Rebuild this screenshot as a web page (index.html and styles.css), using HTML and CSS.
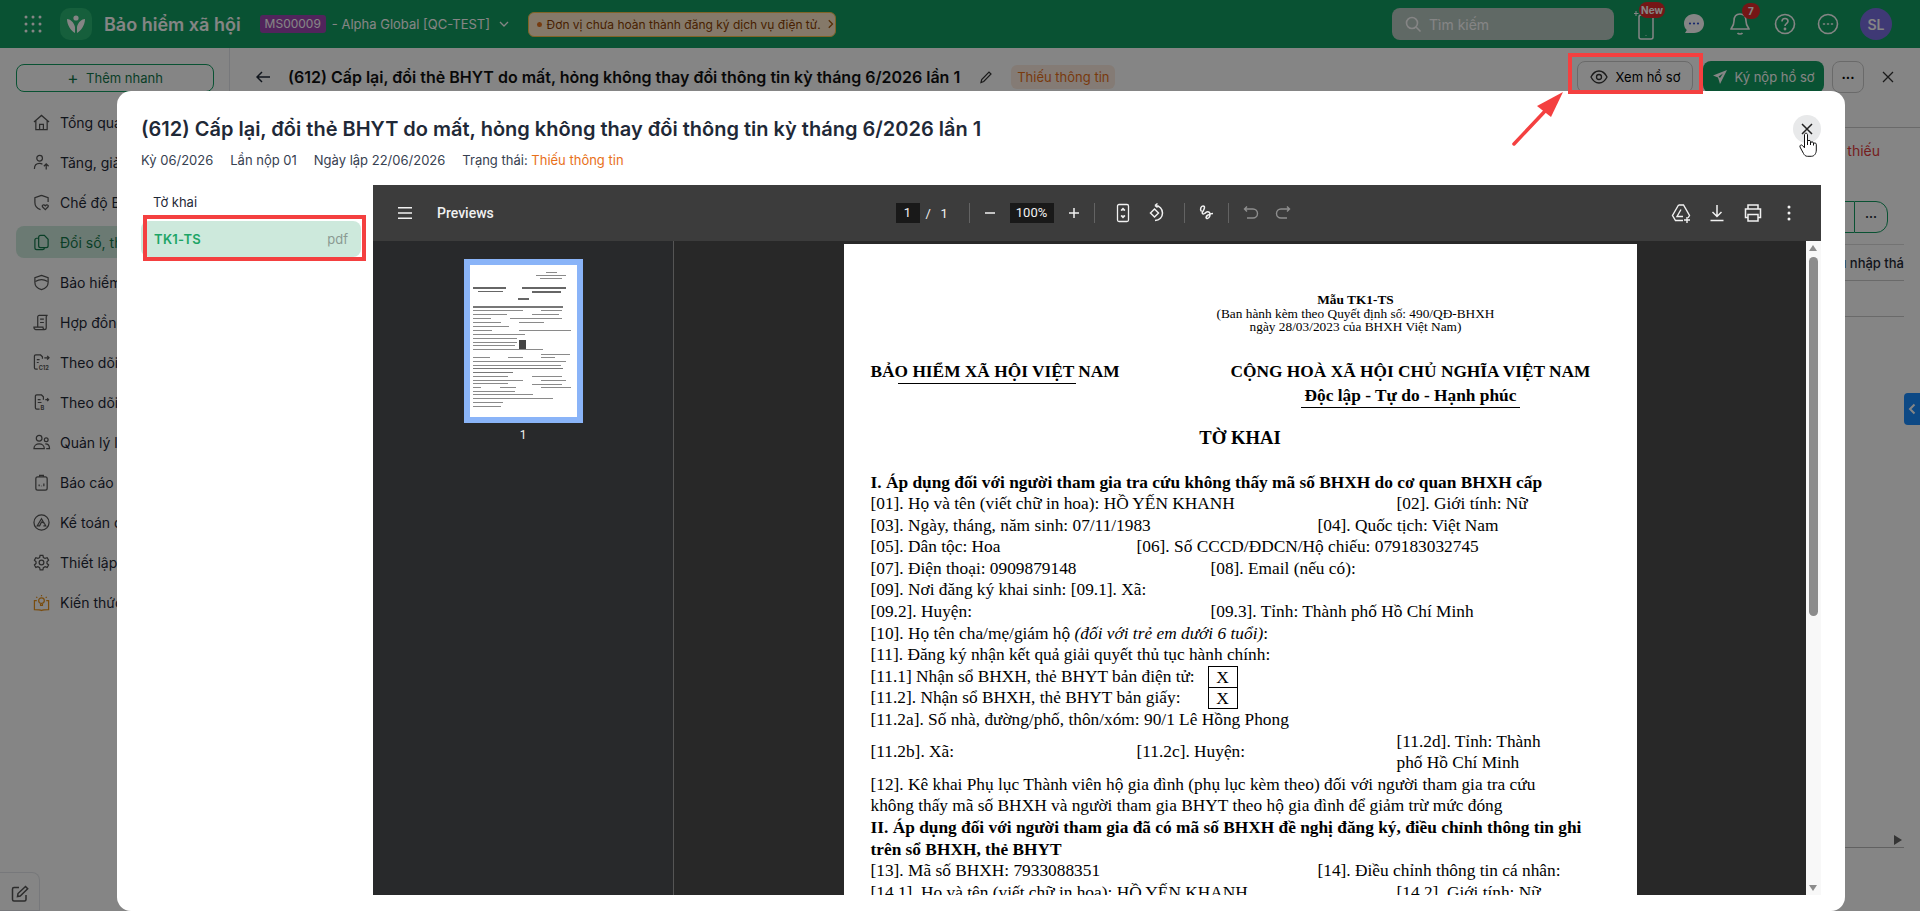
FILE: index.html
```html
<!DOCTYPE html>
<html lang="vi">
<head>
    <meta charset="UTF-8">
    <meta name="viewport" content="width=device-width, initial-scale=1.0">
    <title>Bảo hiểm xã hội</title>
    <link rel="stylesheet" href="styles.css">
</head>
<body>
    <div class="app">
        <!-- Top bar -->
        <header class="topbar">
            <svg class="apps" width="20" height="20" viewBox="0 0 20 20" fill="#fff"><circle cx="3" cy="3" r="1.5"/><circle cx="10" cy="3" r="1.5"/><circle cx="17" cy="3" r="1.5"/><circle cx="3" cy="10" r="1.5"/><circle cx="10" cy="10" r="1.5"/><circle cx="17" cy="10" r="1.5"/><circle cx="3" cy="17" r="1.5"/><circle cx="10" cy="17" r="1.5"/><circle cx="17" cy="17" r="1.5"/></svg>
            <div class="logo">
                <svg width="22" height="22" viewBox="0 0 22 22" fill="#fff"><circle cx="11" cy="5" r="2.6"/><path d="M2 6c3 0 7 3 8 8v6C6 18 2 12 2 6zM20 6c-3 0-7 3-8 8v6c4-2 8-8 8-14z"/></svg>
            </div>
            <div class="brand">Bảo hiểm xã hội</div>
            <span class="org-code">MS00009</span>
            <span class="org-name">- Alpha Global [QC-TEST]</span>
            <svg class="org-caret" width="12" height="12" viewBox="0 0 12 12" fill="none" stroke="#fff" stroke-width="1.3"><path d="M2 4l4 4 4-4"/></svg>
            <div class="notice">
                <span class="notice-dot"></span>
                <span>Đơn vị chưa hoàn thành đăng ký dịch vụ điện tử.</span>
                <svg width="10" height="12" viewBox="0 0 10 12" fill="none" stroke="#a35a10" stroke-width="1.4"><path d="M3 2l4 4-4 4"/></svg>
            </div>
            <div class="search">
                <svg width="18" height="18" viewBox="0 0 18 18" fill="none" stroke="#fff" stroke-width="1.6"><circle cx="8" cy="8" r="5.5"/><path d="M12 12l4.5 4.5"/></svg>
                <span>Tìm kiếm</span>
            </div>
            <div class="top-icons">
                <div class="top-icon phone">
                    <svg width="24" height="32" viewBox="0 0 24 32" fill="none" stroke="#fff" stroke-width="1.5"><rect x="5" y="7" width="14" height="24" rx="2"/><path d="M12 27.5v.5"/><path d="M2 3v5M-.5 5.5h5" stroke-width="1"/></svg>
                    <span class="badge new">New</span>
                </div>
                <div class="top-icon chat">
                    <svg width="22" height="22" viewBox="0 0 22 22"><path d="M11 1c5.5 0 10 3.900 10 9.500S16.500 20 11 20H2l1.800-3C2 15.500 1 13 1 10.500 1 4.900 5.500 1 11 1z" fill="#fff"/><circle cx="7" cy="10.500" r="1.100" fill="#2f4fd0"/><circle cx="11" cy="10.500" r="1.100" fill="#2f4fd0"/><circle cx="15" cy="10.500" r="1.100" fill="#2f4fd0"/></svg>
                </div>
                <div class="top-icon bell">
                    <svg width="22" height="24" viewBox="0 0 22 24" fill="none" stroke="#fff" stroke-width="1.6"><path d="M11 2c-4 0-6 3-6 7 0 5-3 7-3 8h18c0-1-3-3-3-8 0-4-2-7-6-7z"/><path d="M8.500 21c1 1.300 4 1.300 5 0"/></svg>
                    <span class="badge count">7</span>
                </div>
                <div class="top-icon help">
                    <svg width="22" height="22" viewBox="0 0 22 22" fill="none" stroke="#fff" stroke-width="1.6"><circle cx="11" cy="11" r="9.500"/><path d="M8 8.500C8 6.500 9.500 5.500 11 5.500s3 1 3 2.800c0 2.400-3 2.400-3 4.700"/><circle cx="11" cy="16" r=".6"/></svg>
                </div>
                <div class="top-icon more">
                    <svg width="22" height="22" viewBox="0 0 22 22" fill="none" stroke="#fff" stroke-width="1.6"><circle cx="11" cy="11" r="9.500"/><path d="M6.500 11h1M10.500 11h1M14.500 11h1" stroke-linecap="round"/></svg>
                </div>
                <div class="avatar">SL</div>
            </div>
        </header>

        <div class="content">
            <!-- Sidebar -->
            <aside class="sidebar">
                <button class="quick-add"><span class="plus">+</span> Thêm nhanh</button>
                <nav class="menu">
                    <a class="menu-item"><svg viewBox="0 0 18 18"><path d="M1 8.500L9 1.500l8 7M3 7v9.500h12V7M7 16.500V11h4v5.500"/></svg>Tổng quan</a>
                    <a class="menu-item"><svg viewBox="0 0 18 18"><circle cx="7" cy="4.500" r="3"/><path d="M1.500 16c0-4 2.500-6 5.500-6 1 0 2 .2 3 .8M14 16.500v-6M11.500 13l2.500-2.500 2.500 2.500"/></svg>Tăng, giảm lao động</a>
                    <a class="menu-item"><svg viewBox="0 0 18 18"><path d="M9 1.500l7 2.500v4.500M9 1.500L2 4v5c0 3.500 2.500 6.500 6 7.500"/><path d="M13 16.500l-3-3c-1-1.500 1.500-3 3-1 1.500-2 4-.5 3 1z"/></svg>Chế độ BHXH</a>
                    <a class="menu-item active"><svg viewBox="0 0 18 18"><path d="M6 3.500c0-1 .8-2 2-2h4l4 4v7c0 1-.8 2-2 2H8c-1.200 0-2-1-2-2z"/><path d="M6 4.500H4c-1.200 0-2 1-2 2v8c0 1.200.8 2 2 2h6c1.200 0 2-.8 2-2"/></svg>Đổi sổ, thẻ BHYT</a>
                    <a class="menu-item"><svg viewBox="0 0 18 18"><path d="M9 1.500l7 2.500v5c0 4-3 6.500-7 7.500-4-1-7-3.500-7-7.500V4z"/><path d="M2.500 8c4-2.500 9-2.500 13 0"/></svg>Bảo hiểm xã hội</a>
                    <a class="menu-item"><svg viewBox="0 0 18 18"><path d="M5 14V3c0-.8.7-1.500 1.500-1.500h9c-1 0-1.500.7-1.500 1.500v11.500c0 1-.8 2-2 2H3c-1 0-2-1-2-2.500h9.500c0 1 .5 2 1.500 2.500M7.500 5.500h4M7.500 9h4"/></svg>Hợp đồng</a>
                    <a class="menu-item"><svg viewBox="0 0 18 18"><path d="M10 5V3L8 1H3c-1 0-1.500.5-1.500 1.500v12C1.500 15.500 2 16 3 16h2M4 6h3M4 9h2M12 4h5M15 2l2 2-2 2"/><text x="6" y="17" class="icon-label">C12</text></svg>Theo dõi C12</a>
                    <a class="menu-item"><svg viewBox="0 0 18 18"><path d="M11 6V3L9 1H4c-1 0-1.500.5-1.500 1.500v12c0 1 .5 1.500 1.500 1.500h3M5 6h3M5 9h4M13 6h3M15 4.500L16.500 6 15 7.500"/><text x="8" y="17" class="icon-label">B</text></svg>Theo dõi D02</a>
                    <a class="menu-item"><svg viewBox="0 0 18 18"><circle cx="6.500" cy="4.500" r="3"/><circle cx="14" cy="6" r="2"/><path d="M1 15.500c0-3 2.500-5 5.500-5s5.500 2 5.500 5zM13 10.500c2.500 0 4.500 1.500 4.500 5H14"/></svg>Quản lý lao động</a>
                    <a class="menu-item"><svg viewBox="0 0 18 18"><rect x="3" y="3" width="12" height="14" rx="2"/><path d="M7 3V1.500h4V3M6.500 13v-2M9 13v-.5M11.500 13v-3"/></svg>Báo cáo</a>
                    <a class="menu-item"><svg viewBox="0 0 18 18"><circle cx="9" cy="9" r="8"/><path d="M4.500 12.500L9 5l2.500 4.500-2.500-1-2 4zM11 12.500h2.500L11.500 9"/></svg>Kế toán dịch vụ</a>
                    <a class="menu-item"><svg viewBox="0 0 18 18"><circle cx="9" cy="9" r="2.500"/><path d="M7.500 1.500h3l.5 2.200 1.800 1 2.200-.7 1.500 2.600-1.700 1.600v1.800l1.700 1.600L15 14.200l-2.200-.7-1.800 1-.5 2.200h-3L7 14.500l-1.800-1-2.200.7-1.500-2.600 1.700-1.600V8.200L1.500 6.600 3 4l2.200.7 1.800-1z"/></svg>Thiết lập</a>
                    <a class="menu-item know"><svg viewBox="0 0 18 18"><circle cx="9" cy="7" r="3"/><path d="M8 10.500v1.500h2v-1.500M9 1v1.500M3.500 3l1 1M14.500 3l-1 1M4 7H1.500v9.500c3 0 6 0 7.500 1 1.500-1 4.500-1 7.500-1V7H14"/></svg>Kiến thức</a>
                </nav>
                <div class="note-btn">
                    <svg width="18" height="18" viewBox="0 0 18 18" fill="none" stroke="#555" stroke-width="1.500"><path d="M8 2.500H3c-1 0-1.500.5-1.500 1.500v10.500c0 1 .5 1.500 1.500 1.500h10.500c1 0 1.500-.5 1.500-1.500V10"/><path d="M6.500 11.500l.5-3 7.500-7 2.200 2.200-7.500 7.300z"/></svg>
                </div>
            </aside>

            <!-- Page behind the dialog -->
            <main class="main">
                <div class="subhead">
                    <svg class="back" width="14" height="12" viewBox="0 0 14 12" fill="none" stroke="#1f2937" stroke-width="1.500"><path d="M14 6H1M6 1L1 6l5 5"/></svg>
                    <div class="sub-title">(612) Cấp lại, đổi thẻ BHYT do mất, hỏng không thay đổi thông tin kỳ tháng 6/2026 lần 1</div>
                    <svg class="pencil" width="14" height="14" viewBox="0 0 14 14" fill="none" stroke="#333" stroke-width="1.200"><path d="M2 12.500l.7-3L10 2l2 2-7.300 7.500z"/></svg>
                    <span class="sub-tag">Thiếu thông tin</span>
                    <div class="sub-actions">
                        <button class="btn-view">
                            <svg width="18" height="18" viewBox="0 0 18 18" fill="none" stroke="#333" stroke-width="1.300"><path d="M1 9c2-4 5-6 8-6s6 2 8 6c-2 4-5 6-8 6s-6-2-8-6z"/><circle cx="9" cy="9" r="2.500"/></svg>
                            Xem hồ sơ
                        </button>
                        <button class="btn-submit">
                            <svg width="16" height="16" viewBox="0 0 16 16" fill="#fff"><path d="M15 1L1 6.500l5 2 2 6.500zM6.500 7.500L11 4.500 8 9z"/></svg>
                            Ký nộp hồ sơ
                        </button>
                        <button class="btn-dots">···</button>
                        <svg class="sub-close" width="12" height="12" viewBox="0 0 12 12" stroke="#333" stroke-width="1.300"><path d="M1 1l10 10M11 1L1 11"/></svg>
                    </div>
                </div>
                <div class="strip">
                    <span class="strip-text">Còn thiếu</span>
                </div>
                <div class="side-card">
                    <div class="group-row"><span class="group-a"></span><span class="group-b">···</span></div>
                    <div class="card-row tabs-row">Nhập thông tin thu nhập thá</div>
                    <div class="card-row"></div>
                    <div class="card-spacer">
                        <svg class="play" width="8" height="10" viewBox="0 0 8 10" fill="#666"><path d="M0 0l8 5-8 5z"/></svg>
                    </div>
                    <div class="card-foot">
                        <svg width="14" height="12" viewBox="0 0 14 12" fill="none" stroke="#666" stroke-width="1.500"><path d="M2 1l5 5-5 5M12 1v10"/></svg>
                    </div>
                </div>
                <div class="side-tab">
                    <svg width="8" height="12" viewBox="0 0 8 12" fill="none" stroke="#fff" stroke-width="2"><path d="M6.500 1.500L2 6l4.500 4.500"/></svg>
                </div>
            </main>
        </div>
    </div>

    <div class="overlay"></div>

    <!-- Dialog -->
    <section class="modal">
        <h1 class="modal-title">(612) Cấp lại, đổi thẻ BHYT do mất, hỏng không thay đổi thông tin kỳ tháng 6/2026 lần 1</h1>
        <div class="modal-meta">
            <span>Kỳ 06/2026</span>
            <span>Lần nộp 01</span>
            <span>Ngày lập 22/06/2026</span>
            <span>Trạng thái: <b>Thiếu thông tin</b></span>
        </div>
        <button class="modal-close">
            <svg width="12" height="12" viewBox="0 0 12 12" stroke="#222" stroke-width="1.500"><path d="M1 1l10 10M11 1L1 11"/></svg>
        </button>

        <div class="modal-body">
            <div class="files">
                <div class="files-label">Tờ khai</div>
                <div class="file-item"><span class="file-name">TK1-TS</span><span class="file-ext">pdf</span></div>
            </div>

            <div class="viewer">
                <div class="v-toolbar">
                    <div class="v-left">
                        <svg class="v-btn" viewBox="0 0 32 32" fill="#f1f1f1"><path d="M9 10h14v1.500H9zM9 15.250h14v1.500H9zM9 20.500h14V22H9z"/></svg>
                        <span class="v-title">Previews</span>
                    </div>
                    <div class="v-center">
                        <span class="v-box v-page">1</span>
                        <span class="v-of">/&nbsp;&nbsp;&nbsp;1</span>
                        <span class="v-sep"></span>
                        <svg class="v-btn m4" viewBox="0 0 32 32" fill="#f1f1f1"><path d="M11 15.250h10v1.500H11z"/></svg>
                        <span class="v-box v-zoom m4">100%</span>
                        <svg class="v-btn m4" viewBox="0 0 32 32" fill="#f1f1f1"><path d="M11 15.250h4.250V11h1.500v4.250H21v1.500h-4.250V21h-1.500v-4.250H11z"/></svg>
                        <span class="v-sep m4"></span>
                        <svg class="v-btn m12" viewBox="0 0 32 32" fill="none" stroke="#f1f1f1" stroke-width="1.300"><rect x="10.500" y="7.500" width="11" height="17" rx="1.500"/><path d="M14 13.500l2-2 2 2M14 18.500l2 2 2-2" fill="#f1f1f1"/></svg>
                        <svg class="v-btn" viewBox="0 0 32 32" fill="none" stroke="#f1f1f1" stroke-width="1.500"><path d="M11.500 16l4-4 4 4-4 4z"/><path d="M16 8.500c4.500 0 7.500 3.500 7.500 7.500S20.500 23.500 16 23.500M16 8.500l2.500-2M16 8.500l2.500 2"/></svg>
                        <span class="v-sep m13"></span>
                        <svg class="v-btn m5" viewBox="0 0 32 32" fill="none" stroke="#f1f1f1" stroke-width="1.500"><path d="M11.500 14.500c-2-2-.5-5.500 1.500-5.500 2.500 0 1.500 3-.5 6-1 1.500.5 2.500 2 1.500 2-1.500 3-3 5-1 1.500 1.500 0 6-2 6s-2-2 .5-3.500c1.500-1 3.500-1.500 5-1.500"/></svg>
                        <span class="v-sep m6"></span>
                        <svg class="v-btn m6 dim" viewBox="0 0 32 32" fill="none" stroke="#f1f1f1" stroke-width="1.400"><path d="M12 9.500L9.500 12l2.500 2.500M9.500 12H18c2.500 0 4.500 2 4.500 4.500S20.500 21 18 21h-6"/></svg>
                        <svg class="v-btn dim" viewBox="0 0 32 32" fill="none" stroke="#f1f1f1" stroke-width="1.400"><path d="M20 9.500l2.500 2.500-2.500 2.500M22.500 12H14c-2.500 0-4.500 2-4.500 4.500S11.500 21 14 21h6"/></svg>
                    </div>
                    <div class="v-right">
                        <svg class="v-act" viewBox="0 0 36 32" fill="none" stroke="#f1f1f1" stroke-width="1.400"><path d="M15.500 8h5l6 10.500-1.500 2.500M15.500 8L9.500 18.500l3 5H20"/><path d="M18 12.500L14 19.500h6"/><path d="M24 20v6M21 23h6"/></svg>
                        <svg class="v-act" viewBox="0 0 36 32" fill="none" stroke="#f1f1f1" stroke-width="1.500"><path d="M18 8v11M13.500 15l4.500 4.500 4.500-4.500M11.500 23.500h13"/></svg>
                        <svg class="v-act" viewBox="0 0 36 32" fill="none" stroke="#f1f1f1" stroke-width="1.500"><path d="M13 12V8h10v4M13 20.500H10.500v-8.500h15v8.500H23"/><rect x="13" y="17.500" width="10" height="6.500"/></svg>
                        <svg class="v-act" viewBox="0 0 36 32" fill="#f1f1f1"><circle cx="18" cy="10" r="1.500"/><circle cx="18" cy="16" r="1.500"/><circle cx="18" cy="22" r="1.500"/></svg>
                    </div>
                </div>

                <div class="v-content">
                    <div class="v-thumbs">
                        <div class="thumb">
                            <svg class="thumb-page" width="107" height="152" viewBox="0 0 107 152" fill="#8a8a8a">
                                <path d="M76 7h11v1H76zM66 10h30v1H66zM70 13h22v1H70z"/>
                                <path fill="#666" d="M3 22h33v2H3zM52 22h44v2H52zM8 26h25v1H8zM62 26h29v2H62zM48 33h11v2H48z"/>
                                <path fill="#777" d="M3 41h90v2H3z"/>
                                <path d="M3 45h50v1H3zM71 45h21v1H71zM3 49h34v1H3zM62 49h27v1H62zM3 53h18v1H3zM40 53h52v1H40zM3 57h28v1H3zM49 57h25v1H49zM3 61h36v1H3zM3 65h19v1H3zM49 65h52v1H49zM3 69h52v1H3zM3 73h44v1H3zM3 77h44v1H3zM3 80h42v1H3zM3 84h70v1H3z"/>
                                <path fill="#444" d="M49 75h7v9h-7z"/>
                                <path d="M71 89h29v1H71zM71 92h14v1H71zM3 92h17v1H3zM38 92h15v1H38zM3 96h93v1H3zM3 100h88v1H3z"/>
                                <path fill="#777" d="M3 103h90v1H3zM3 107h40v1H3z"/>
                                <path d="M3 111h35v1H3zM62 111h30v1H62zM3 115h50v1H3zM71 115h25v1H71zM3 118h35v1H3zM62 119h30v1H62zM3 122h8v1H3zM30 122h16v1H30zM71 122h30v1H71zM3 126h42v1H3zM3 129h35v1H3zM38 129h25v1H38zM3 133h80v1H3zM3 137h30v1H3zM3 141h28v1H3z"/>
                            </svg>
                        </div>
                        <span class="thumb-num">1</span>
                    </div>
                    <div class="v-main">
                        <article class="pdf-page">
                            <div class="form-note">
                                <b>Mẫu TK1-TS</b>
                                <div>(Ban hành kèm theo Quyết định số: 490/QĐ-BHXH</div>
                                <div>ngày 28/03/2023 của BHXH Việt Nam)</div>
                            </div>
                            <div class="nation">
                                <div class="nation-left">
                                    <b>BẢO HIỂM XÃ HỘI VIỆT NAM</b>
                                    <div class="rule-left"></div>
                                </div>
                                <div class="nation-right">
                                    <b>CỘNG HOÀ XÃ HỘI CHỦ NGHĨA VIỆT NAM</b>
                                    <b>Độc lập - Tự do - Hạnh phúc</b>
                                    <div class="rule-right"></div>
                                </div>
                            </div>
                            <div class="form-title">TỜ KHAI</div>

                            <div class="line"><b>I. Áp dụng đối với người tham gia tra cứu không thấy mã số BHXH do cơ quan BHXH cấp</b></div>
                            <div class="line w526"><span>[01]. Họ và tên (viết chữ in hoa): HỒ YẾN KHANH</span><span>[02]. Giới tính: Nữ</span></div>
                            <div class="line w447"><span>[03]. Ngày, tháng, năm sinh: 07/11/1983</span><span>[04]. Quốc tịch: Việt Nam</span></div>
                            <div class="line w266"><span>[05]. Dân tộc: Hoa</span><span>[06]. Số CCCD/ĐDCN/Hộ chiếu: 079183032745</span></div>
                            <div class="line w340"><span>[07]. Điện thoại: 0909879148</span><span>[08]. Email (nếu có):</span></div>
                            <div class="line">[09]. Nơi đăng ký khai sinh: [09.1]. Xã:</div>
                            <div class="line w340"><span>[09.2]. Huyện:</span><span>[09.3]. Tỉnh: Thành phố Hồ Chí Minh</span></div>
                            <div class="line">[10]. Họ tên cha/mẹ/giám hộ&nbsp;<i>(đối với trẻ em dưới 6 tuổi)</i>:</div>
                            <div class="line">[11]. Đăng ký nhận kết quả giải quyết thủ tục hành chính:</div>
                            <div class="line w337"><span>[11.1] Nhận sổ BHXH, thẻ BHYT bản điện tử:</span><span class="check">X</span></div>
                            <div class="line w337"><span>[11.2]. Nhận sổ BHXH, thẻ BHYT bản giấy:</span><span class="check">X</span></div>
                            <div class="line">[11.2a]. Số nhà, đường/phố, thôn/xóm: 90/1 Lê Hồng Phong</div>
                            <div class="line-tall">
                                <span>[11.2b]. Xã:</span>
                                <span>[11.2c]. Huyện:</span>
                                <span>[11.2d]. Tỉnh: Thành phố Hồ Chí Minh</span>
                            </div>
                            <div class="line">[12]. Kê khai Phụ lục Thành viên hộ gia đình (phụ lục kèm theo) đối với người tham gia tra cứu</div>
                            <div class="line">không thấy mã số BHXH và người tham gia BHYT theo hộ gia đình để giảm trừ mức đóng</div>
                            <div class="line"><b>II. Áp dụng đối với người tham gia đã có mã số BHXH đề nghị đăng ký, điều chỉnh thông tin ghi</b></div>
                            <div class="line"><b>trên sổ BHXH, thẻ BHYT</b></div>
                            <div class="line w447"><span>[13]. Mã số BHXH: 7933088351</span><span>[14]. Điều chỉnh thông tin cá nhân:</span></div>
                            <div class="line w526"><span>[14.1]. Họ và tên (viết chữ in hoa): HỒ YẾN KHANH</span><span>[14.2]. Giới tính: Nữ</span></div>
                        </article>
                    </div>
                    <div class="v-scroll">
                        <span class="arrow-up"></span>
                        <span class="scroll-thumb"></span>
                        <span class="arrow-down"></span>
                    </div>
                </div>
            </div>
        </div>
    </section>

    <!-- Red marks drawn over the screenshot -->
    <div class="mark mark-view"></div>
    <div class="mark mark-file"></div>
    <svg class="mark-arrow" width="70" height="70" viewBox="0 0 70 70" fill="#f44040"><path d="M9 59L42 24" stroke="#f44040" stroke-width="3.500" stroke-linecap="round"/><path d="M58 7L32 21l14 11z"/></svg>
    <svg class="hand" width="18" height="25" viewBox="0 0 18 25"><path d="M5.500 11V2.800C5.500.7 8.500.7 8.500 2.800V9.500c0-1.500 3-1.500 3 0V11c0-1.500 3-1.500 3 0v1c0-1.400 2.800-1.400 2.800.3V18c0 3.500-2 6.300-5 6.300H8.500c-2 0-3-1-4-2.800L1 15c-.7-1.700 1.500-2.800 2.500-1.500l2 2.300z" fill="#fff" stroke="#111" stroke-width="1"/><path d="M8.500 9.500V13M11.500 11v2M14.500 12v1.500" fill="none" stroke="#111" stroke-width="1"/></svg>
</body>
</html>
```

FILE: styles.css
```css
/* Reset and base styles */
* {
    box-sizing: border-box;
    margin: 0;
    padding: 0;
}

html, body {
    height: 100%;
    overflow: hidden;
}

body {
    font-family: Inter, "Noto Sans", sans-serif;
    font-size: 14px;
    color: #1f2937;
    background-color: #fff;
}

button {
    font-family: inherit;
    cursor: pointer;
}

.app {
    display: flex;
    flex-direction: column;
    height: 911px;
}

/* Top bar */
.topbar {
    display: flex;
    align-items: center;
    flex: none;
    height: 48px;
    padding-left: 23px;
    background-color: #139e62;
    color: #fff;
}

.apps {
    flex: none;
}

.logo {
    display: flex;
    align-items: center;
    justify-content: center;
    width: 32px;
    height: 32px;
    margin-left: 17px;
    border-radius: 10px;
    background-color: #2bb673;
}

.brand {
    margin-left: 12px;
    font-size: 18px;
    font-weight: 600;
    white-space: nowrap;
}

.org-code {
    margin-left: 19px;
    padding: 0 5px;
    height: 18px;
    line-height: 18px;
    font-size: 12px;
    border-radius: 3px;
    background-color: #9c46b0;
}

.org-name {
    margin-left: 6px;
    font-size: 13px;
    white-space: nowrap;
}

.org-caret {
    margin-left: 8px;
}

.notice {
    display: flex;
    align-items: center;
    gap: 5px;
    width: 308px;
    height: 25px;
    margin-left: 18px;
    padding-left: 8px;
    font-size: 12px;
    white-space: nowrap;
    color: #8a3d00;
    background-color: #ffe9c9;
    border: 1px solid #f5c04a;
    border-radius: 6px;
}

.notice-dot {
    width: 5px;
    height: 5px;
    border-radius: 50%;
    background-color: #e2711d;
}

.search {
    display: flex;
    align-items: center;
    gap: 7px;
    width: 222px;
    height: 32px;
    margin-left: auto;
    padding-left: 12px;
    font-size: 14px;
    border-radius: 8px;
    background-color: #b9c9c2;
}

.top-icons {
    display: flex;
    align-items: center;
    margin-left: 20px;
    margin-right: 28px;
}

.top-icon {
    position: relative;
    display: flex;
}

.chat {
    margin-left: 25px;
}

.bell {
    margin-left: 24px;
}

.help {
    margin-left: 23px;
}

.more {
    margin-left: 21px;
}

.avatar {
    display: flex;
    align-items: center;
    justify-content: center;
    width: 32px;
    height: 32px;
    margin-left: 21px;
    font-size: 14px;
    font-weight: 600;
    border-radius: 50%;
    background-color: #7a6ee0;
}

.badge {
    position: absolute;
    font-weight: 700;
    font-size: 10px;
    text-align: center;
    border-radius: 8px;
    background-color: #e12b2b;
}

.badge.new {
    top: -6px;
    left: 5px;
    width: 26px;
    height: 16px;
    line-height: 16px;
}

.badge.count {
    top: -9px;
    left: 13px;
    width: 18px;
    height: 16px;
    line-height: 16px;
}

/* Page under the dialog */
.content {
    display: flex;
    flex: 1;
    min-height: 0;
}

.sidebar {
    position: relative;
    flex: none;
    width: 230px;
    padding: 16px 16px 0;
    border-right: 1px solid #e5e7eb;
}

.quick-add {
    width: 198px;
    height: 28px;
    font-size: 13px;
    color: #14794c;
    background-color: #fff;
    border: 1px solid #139e62;
    border-radius: 8px;
}

.plus {
    font-size: 17px;
    vertical-align: -1px;
    margin-right: 4px;
}

.menu {
    margin-top: 14px;
}

.menu-item {
    display: flex;
    align-items: center;
    gap: 10px;
    height: 32px;
    margin-bottom: 8px;
    padding-left: 17px;
    font-size: 14px;
    white-space: nowrap;
    border-radius: 8px;
}

.menu-item svg {
    flex: none;
    width: 17px;
    height: 17px;
    fill: none;
    stroke: #555;
    stroke-width: 1.300;
    overflow: visible;
}

.icon-label {
    font-size: 6px;
    font-weight: 700;
    fill: #555;
    stroke: none;
}

.menu-item.active {
    color: #14794c;
    background-color: #cdeadc;
}

.menu-item.active svg {
    stroke: #14794c;
}

.menu-item.know svg {
    stroke: #e8921a;
}

.note-btn {
    position: absolute;
    left: 0;
    bottom: 0;
    display: flex;
    justify-content: center;
    width: 40px;
    height: 39px;
    padding-top: 12px;
    border: 1px solid #e5e7eb;
    border-left: none;
    border-radius: 0 8px 0 0;
}

.main {
    position: relative;
    flex: 1;
    min-width: 0;
    background-color: #fff;
}

.subhead {
    display: flex;
    align-items: center;
    height: 58px;
    padding: 0 0 0 26px;
    border-bottom: 1px solid #ccc;
    margin-bottom: 0;
    height: 80px;
    padding-bottom: 22px;
}

.back {
    flex: none;
}

.sub-title {
    margin-left: 18px;
    font-size: 16px;
    font-weight: 600;
    white-space: nowrap;
    color: #111;
}

.pencil {
    margin-left: 19px;
}

.sub-tag {
    margin-left: 18px;
    padding: 0 6px;
    height: 24px;
    line-height: 24px;
    font-size: 13px;
    color: #e8701a;
    background-color: #fdece0;
    border-radius: 6px;
}

.sub-actions {
    display: flex;
    align-items: center;
    margin-left: auto;
    margin-right: 26px;
}

.btn-view {
    display: flex;
    align-items: center;
    justify-content: center;
    gap: 8px;
    width: 116px;
    height: 32px;
    font-size: 13px;
    background-color: #fff;
    border: 1px solid #ccc;
    border-radius: 8px;
}

.btn-submit {
    display: flex;
    align-items: center;
    justify-content: center;
    gap: 6px;
    width: 121px;
    height: 32px;
    margin-left: 10px;
    font-size: 13px;
    color: #fff;
    background-color: #139e62;
    border: none;
    border-radius: 8px;
}

.btn-dots {
    width: 32px;
    height: 32px;
    margin-left: 8px;
    font-size: 13px;
    font-weight: 700;
    background-color: #fff;
    border: 1px solid #ccc;
    border-radius: 8px;
}

.sub-close {
    margin-left: 18px;
}

.strip {
    display: flex;
    justify-content: flex-end;
    align-items: center;
    height: 44px;
    padding-right: 40px;
    font-size: 14px;
    color: #e23b3b;
    background-color: #fff;
}

.side-card {
    position: absolute;
    top: 141px;
    left: 1400px;
    right: 16px;
    bottom: 16px;
    display: flex;
    flex-direction: column;
    border-radius: 12px;
    background-color: #fff;
}

.group-row {
    display: flex;
    flex: none;
    align-items: center;
    justify-content: flex-end;
    height: 56px;
    padding-right: 16px;
    border-bottom: 1px solid #ddd;
}

.group-a {
    width: 40px;
    height: 32px;
    border: 1px solid #139e62;
    border-right: none;
}

.group-b {
    width: 34px;
    height: 32px;
    line-height: 30px;
    text-align: center;
    font-weight: 700;
    font-size: 12px;
    border: 1px solid #139e62;
    border-radius: 0 12px 12px 0;
}

.card-row {
    flex: none;
    height: 36px;
    line-height: 36px;
    text-align: right;
    font-weight: 500;
    font-size: 13px;
    white-space: nowrap;
    overflow: hidden;
    border-bottom: 1px solid #ccc;
}

.card-spacer {
    display: flex;
    flex: 1;
    align-items: flex-end;
    justify-content: flex-end;
    padding: 0 2px 2px 0;
    border-bottom: 1px solid #bbb;
}

.card-foot {
    display: flex;
    flex: none;
    align-items: center;
    justify-content: center;
    height: 47px;
    padding-left: 0;
}

.side-tab {
    position: absolute;
    top: 345px;
    right: 0;
    display: flex;
    align-items: center;
    justify-content: center;
    width: 16px;
    height: 32px;
    border-radius: 4px 0 0 4px;
    background-color: #1a8cff;
}

.overlay {
    position: absolute;
    inset: 0;
    background-color: rgba(0, 0, 0, 0.48);
}

/* Dialog */
.modal {
    position: absolute;
    left: 117px;
    top: 91px;
    width: 1728px;
    height: 820px;
    padding: 24px 24px 16px;
    display: flex;
    flex-direction: column;
    background-color: #fff;
    border-radius: 14px;
}

.modal-title {
    height: 28px;
    font-size: 20px;
    line-height: 28px;
    font-weight: 600;
    color: #1f2937;
    white-space: nowrap;
}

.modal-meta {
    display: flex;
    gap: 17px;
    height: 22px;
    margin-top: 6px;
    font-size: 13px;
    line-height: 22px;
    color: #374151;
}

.modal-meta b {
    font-weight: 400;
    color: #e8701a;
}

.modal-close {
    position: absolute;
    top: 24px;
    right: 24px;
    width: 28px;
    height: 28px;
    display: flex;
    align-items: center;
    justify-content: center;
    border: none;
    border-radius: 50%;
    background-color: #e8e9ea;
}

.modal-body {
    display: flex;
    flex: 1;
    min-height: 0;
    margin-top: 14px;
}

.files {
    flex: none;
    width: 232px;
}

.files-label {
    height: 36px;
    padding-left: 12px;
    font-size: 13px;
    line-height: 34px;
}

.file-item {
    display: flex;
    align-items: center;
    justify-content: space-between;
    width: 220px;
    height: 36px;
    padding: 0 13px;
    border-radius: 8px;
    background-color: #cde9dc;
}

.file-name {
    font-size: 13px;
    font-weight: 600;
    letter-spacing: .3px;
    color: #1ca566;
}

.file-ext {
    font-size: 13px;
    color: #8a9a92;
}

/* PDF viewer */
.viewer {
    display: flex;
    flex: 1;
    flex-direction: column;
    min-width: 0;
    margin-right: 0;
    font-family: Roboto, sans-serif;
    color: #f1f1f1;
}

.v-toolbar {
    display: grid;
    grid-template-columns: 1fr auto 1fr;
    align-items: center;
    flex: none;
    height: 56px;
    background-color: #3c3c3c;
}

.v-left, .v-center, .v-right {
    display: flex;
    align-items: center;
}

.v-left {
    padding-left: 16px;
}

.v-right {
    justify-content: flex-end;
    padding-right: 14px;
}

.v-btn {
    flex: none;
    width: 32px;
    height: 32px;
}

.v-act {
    flex: none;
    width: 36px;
    height: 32px;
}

.v-title {
    margin-left: 16px;
    font-size: 14px;
    font-weight: 500;
}

.v-box {
    height: 20px;
    line-height: 20px;
    font-size: 13px;
    text-align: center;
    background-color: #191919;
}

.v-page {
    width: 24px;
}

.v-zoom {
    width: 44px;
}

.v-of {
    width: 49px;
    padding-left: 6px;
    font-size: 13px;
}

.v-sep {
    flex: none;
    width: 1px;
    height: 20px;
    background-color: #636363;
}

.m4 { margin-left: 4px; }
.m5 { margin-left: 5px; }
.m6 { margin-left: 6px; }
.m12 { margin-left: 12px; }
.m13 { margin-left: 13px; }

.dim {
    opacity: .45;
}

.v-content {
    display: flex;
    flex: 1;
    min-height: 0;
    background-color: #282828;
}

.v-thumbs {
    display: flex;
    flex: none;
    flex-direction: column;
    align-items: center;
    width: 301px;
    padding-top: 18px;
    background-color: #28292b;
    border-right: 1px solid #555;
}

.thumb {
    display: flex;
    width: 119px;
    height: 164px;
    padding: 6px;
    background-color: #8ab4f8;
}

.thumb-page {
    background-color: #fff;
}

.thumb-num {
    margin-top: 4px;
    font-size: 12px;
    line-height: 16px;
}

.v-main {
    display: flex;
    flex: 1;
    justify-content: center;
    min-width: 0;
    overflow: hidden;
    padding-top: 3px;
}

.pdf-page {
    flex: none;
    width: 793px;
    height: 651px;
    padding: 49px 0 0 27px;
    overflow: hidden;
    font-family: "Liberation Serif", serif;
    font-size: 17.33px;
    line-height: 21.6px;
    color: #000;
    background-color: #fff;
}

.form-note {
    width: 510px;
    margin-left: 230px;
    padding-left: 0;
    font-size: 13.33px;
    line-height: 13.5px;
    text-align: center;
}

.form-note b {
    display: block;
}

.nation {
    display: flex;
    height: 48px;
    margin-top: 26px;
    font-size: 17.33px;
    line-height: 24px;
}

.nation-left, .nation-right {
    width: 360px;
}

.nation-right {
    text-align: center;
}

.nation-right b {
    display: block;
}

.rule-left {
    width: 178px;
    height: 1px;
    margin: -1px 0 0 27px;
    background-color: #000;
}

.rule-right {
    width: 219px;
    height: 1px;
    margin: -1px auto 0;
    background-color: #000;
}

.form-title {
    width: 739px;
    margin-top: 18px;
    margin-bottom: 22px;
    font-size: 18.67px;
    font-weight: 700;
    line-height: 24px;
    text-align: center;
}

.line {
    display: flex;
    height: 21.6px;
    white-space: nowrap;
}

.line > span:first-child {
    flex: none;
}

.w526 > span:first-child { width: 526px; }
.w447 > span:first-child { width: 447px; }
.w340 > span:first-child { width: 340px; }
.w337 > span:first-child { width: 337px; }
.w266 > span:first-child { width: 266px; }

.check {
    width: 30px;
    height: 22px;
    text-align: center;
    border: 1px solid #000;
}

.line-tall {
    display: grid;
    grid-template-columns: 266px 260px 170px;
    align-items: center;
    height: 43.2px;
}

/* Viewer's own scrollbar */
.v-scroll {
    position: relative;
    flex: none;
    width: 15px;
    background-color: #f8f8f8;
}

.arrow-up, .arrow-down {
    position: absolute;
    left: 3px;
    width: 0;
    height: 0;
    border-left: 4.500px solid transparent;
    border-right: 4.500px solid transparent;
}

.arrow-up {
    top: 4px;
    border-bottom: 6px solid #8c8c8c;
}

.arrow-down {
    bottom: 4px;
    border-top: 6px solid #8c8c8c;
}

.scroll-thumb {
    position: absolute;
    left: 3px;
    top: 16px;
    width: 9px;
    height: 359px;
    border-radius: 5px;
    background-color: #8c8c8c;
}

/* Red marks */
.mark {
    position: absolute;
    border: 4px solid #f44040;
}

.mark-view {
    left: 1568px;
    top: 53px;
    width: 135px;
    height: 41px;
}

.mark-file {
    left: 143px;
    top: 215px;
    width: 223px;
    height: 46px;
}

.mark-arrow {
    position: absolute;
    left: 1505px;
    top: 85px;
}

.hand {
    position: absolute;
    left: 1799px;
    top: 132px;
}
```
